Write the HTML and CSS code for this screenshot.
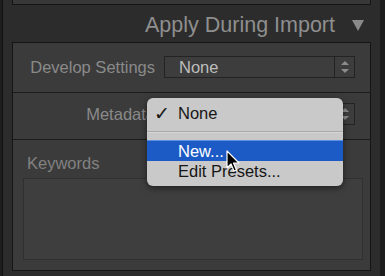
FILE: index.html
```html
<!DOCTYPE html>
<html lang="en">
<head>
    <meta charset="UTF-8">
    <title>Apply During Import</title>
    <link rel="stylesheet" href="styles.css">
</head>
<body>
    <div class="panel">
        <div class="prev-box"></div>

        <div class="header">
            <span class="title">Apply During Import</span>
            <svg class="disclosure" width="12" height="13" viewBox="0 0 12 13">
                <polygon points="0,1 12,1 6,12" fill="#8a8a8a"/>
            </svg>
        </div>

        <div class="sections">
            <div class="section row develop">
                <span class="label">Develop Settings</span>
                <div class="select">
                    <span class="value">None</span>
                    <span class="stepper">
                        <svg width="8" height="12" viewBox="0 0 8 12">
                            <polygon points="4,0 8,4 0,4" fill="#8c8c8c"/>
                            <polygon points="0,8 8,8 4,12" fill="#8c8c8c"/>
                        </svg>
                    </span>
                </div>
            </div>

            <div class="section row metadata">
                <span class="label">Metadata</span>
                <div class="select">
                    <span class="value">None</span>
                    <span class="stepper">
                        <svg width="8" height="12" viewBox="0 0 8 12">
                            <polygon points="4,0 8,4 0,4" fill="#8c8c8c"/>
                            <polygon points="0,8 8,8 4,12" fill="#8c8c8c"/>
                        </svg>
                    </span>
                </div>
            </div>

            <div class="section keywords">
                <span class="label">Keywords</span>
                <div class="keyword-box"></div>
            </div>
        </div>
    </div>

    <!-- popup opened from the Metadata select -->
    <div class="menu">
        <div class="menu-item"><span class="check">✓</span><span>None</span></div>
        <div class="menu-sep"></div>
        <div class="menu-item selected"><span class="check"></span><span>New...</span></div>
        <div class="menu-item"><span class="check"></span><span>Edit Presets...</span></div>
    </div>

    <svg class="cursor" width="14" height="23" viewBox="0 0 14 23">
        <path d="M1 1 L1 18 L5 14 L8 21 L10.5 20 L7.5 13 L13 13 Z" fill="#000" stroke="#fff" stroke-width="1.2" stroke-linejoin="round"/>
    </svg>
</body>
</html>
```

FILE: styles.css
```css
body {
    margin: 0;
    background-color: #1d1d1d;
    font-family: "Liberation Sans", Arial, sans-serif;
    position: relative;
    height: 276px;
    overflow: hidden;
}

.panel {
    margin-left: 2px;
    width: 359px;
    height: 276px;
    padding: 0 9px;
    background-color: #2c2c2c;
    border-left: 1px solid #121212;
}

.prev-box {
    height: 4px;
    background-color: #383838;
    border: 1px solid #151515;
    border-top: none;
}

.header {
    height: 33px;
    padding-top: 4px;
    padding-right: 7px;
    display: flex;
    align-items: center;
    justify-content: flex-end;
    gap: 17px;
}

.title {
    font-size: 21.5px;
    color: #8f8f8f;
}

.sections {
    border: 1px solid #151515;
}

.section {
    background-color: #3b3b3b;
    border-bottom: 1px solid #1b1b1b;
    box-sizing: border-box;
}

.section:last-child {
    border-bottom: none;
}

.row {
    display: grid;
    grid-template-columns: 142px 191px;
    column-gap: 9px;
    align-items: center;
    align-content: start;
}

.develop {
    height: 50px;
    padding-top: 13px;
}

.metadata {
    height: 47px;
    padding-top: 10px;
}

.label {
    font-size: 16.5px;
    color: #8a8a8a;
    text-align: right;
}

.select {
    display: flex;
    height: 20px;
    border: 1px solid #232323;
    background-color: #3d3d3d;
}

.value {
    flex: 1;
    padding-left: 14px;
    font-size: 16.5px;
    line-height: 20px;
    color: #bcbcbc;
}

.stepper {
    width: 19px;
    border-left: 1px solid #232323;
    display: flex;
    align-items: center;
    justify-content: center;
}

.keywords {
    height: 130px;
    padding: 13px 7px 0 10px;
}

.keywords .label {
    display: block;
    text-align: left;
    padding-left: 4px;
    line-height: 20px;
    color: #828282;
}

.keyword-box {
    margin-top: 5px;
    height: 80px;
    border: 1px solid #303030;
    background-color: #3e3e3e;
}

.menu {
    position: absolute;
    left: 147px;
    top: 98px;
    width: 196px;
    height: 83px;
    padding-top: 5px;
    background-color: #c9c9c9;
    border-radius: 6px;
    box-shadow: 0 2px 6px rgba(0, 0, 0, 0.5);
    font-size: 16.5px;
    color: #161616;
}

.menu-item {
    display: grid;
    grid-template-columns: 31px auto;
    line-height: 20px;
}

.check {
    padding-left: 7px;
    font-family: "DejaVu Sans", sans-serif;
    font-size: 19px;
    font-weight: bold;
}

.menu-sep {
    margin: 8px 0 7px;
    height: 1px;
    background-color: #aaaaaa;
    border-bottom: 1px solid #d6d6d6;
}

.menu-item.selected {
    line-height: 20px;
    background-color: #1c5bc6;
    border-top: 1px solid #5f8fdc;
    color: #ffffff;
}

.cursor {
    position: absolute;
    left: 226px;
    top: 150px;
}
```
